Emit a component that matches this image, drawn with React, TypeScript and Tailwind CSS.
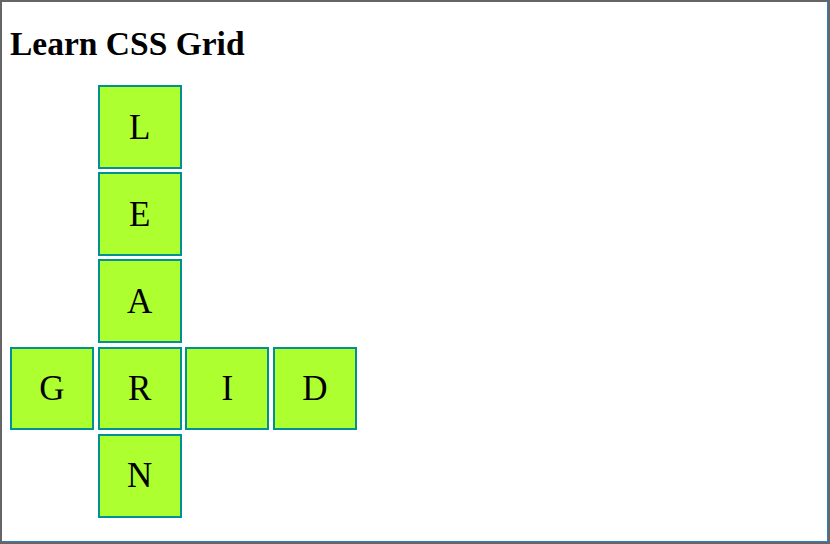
import React from "react";

const cells: { ch: string; col: string; row: string }[] = [
  { ch: "L", col: "col-start-2", row: "row-start-1" },
  { ch: "E", col: "col-start-2", row: "row-start-2" },
  { ch: "A", col: "col-start-2", row: "row-start-3" },
  { ch: "G", col: "col-start-1", row: "row-start-4" },
  { ch: "R", col: "col-start-2", row: "row-start-4" },
  { ch: "I", col: "col-start-3", row: "row-start-4" },
  { ch: "D", col: "col-start-4", row: "row-start-4" },
  { ch: "N", col: "col-start-2", row: "row-start-5" },
];

export default function App() {
  return (
    <div
      className="w-[830px] h-[544px] border-2 border-[#666666] bg-white overflow-hidden"
      style={{ fontFamily: '"Liberation Serif", "Times New Roman", serif' }}
    >
      <div className="w-full h-full border-b border-r border-[#2f7fc8]">
        <div className="px-[8px] pt-[22px]">
          <h1 className="text-[33.5px] leading-[40px] font-bold text-black m-0">Learn CSS Grid</h1>
          <div className="mt-[21px] grid grid-cols-[repeat(4,84px)] grid-rows-[repeat(5,83.6px)] gap-[3.65px]">
            {cells.map((c) => (
              <div
                key={c.ch}
                className={`${c.col} ${c.row} flex items-center justify-center border-2 border-[#009190] bg-[#adff2f] text-[35px] text-black pt-[2px]`}
              >
                {c.ch}
              </div>
            ))}
          </div>
        </div>
      </div>
    </div>
  );
}
